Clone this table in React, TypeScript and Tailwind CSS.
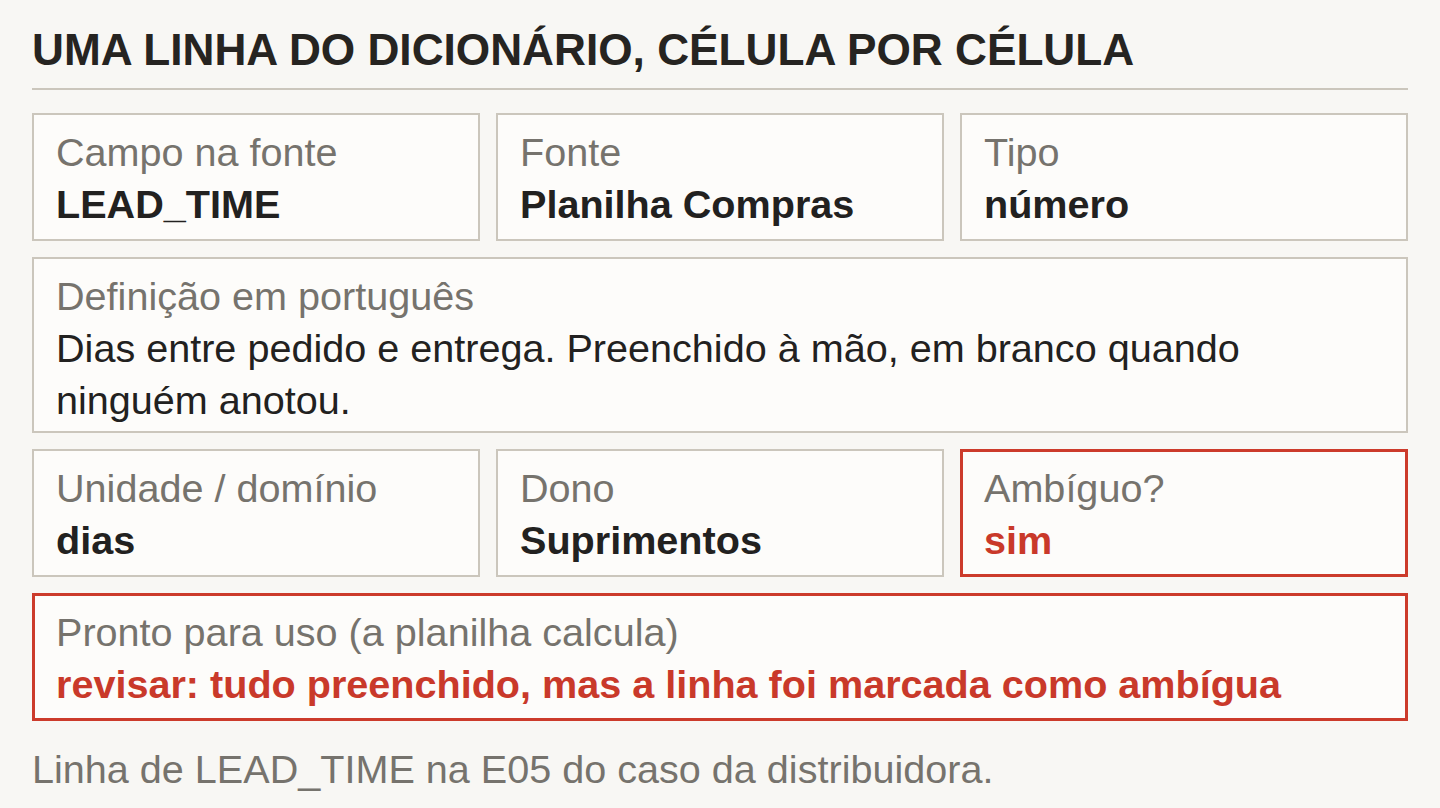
const font = { fontFamily: '"Liberation Sans", Arial, sans-serif' };

function Cell({ label, value, alert = false, wide = false }: { label: string; value: string; alert?: boolean; wide?: boolean }) {
  const box = alert
    ? 'border-[3px] border-[#cc3b2b] pl-[21px] pr-[21px] pt-[10px] pb-[8px]'
    : 'border-2 border-[#cbc6bc] pl-[22px] pr-[22px] pt-[11px] pb-[9px]';
  return (
    <div className={`bg-[#fdfcfa] leading-[52px] ${box} ${wide ? 'col-span-3' : ''}`}>
      <div className="text-[#76736d]">{label}</div>
      <div className={`font-bold ${alert ? 'text-[#c9392a]' : 'text-[#222120]'}`}>{value}</div>
    </div>
  );
}

export default function App() {
  return (
    <div className="min-h-screen bg-[#f8f7f4] px-8 pt-[24px] text-[39.6px]" style={font}>
      <h1 className="text-[44.2px] font-bold leading-[52px] text-[#262421] pb-[12px] border-b-2 border-[#cbc6bc]">
        UMA LINHA DO DICIONÁRIO, CÉLULA POR CÉLULA
      </h1>
      <div className="grid grid-cols-3 gap-4 mt-[23px]">
        <Cell label="Campo na fonte" value="LEAD_TIME" />
        <Cell label="Fonte" value="Planilha Compras" />
        <Cell label="Tipo" value="número" />
        <div className="col-span-3 bg-[#fdfcfa] border-2 border-[#cbc6bc] px-[22px] pt-[11px] pb-[5px] leading-[52px]">
          <div className="text-[#76736d]">Definição em português</div>
          <div className="text-[#222120]">Dias entre pedido e entrega. Preenchido à mão, em branco quando ninguém anotou.</div>
        </div>
        <Cell label="Unidade / domínio" value="dias" />
        <Cell label="Dono" value="Suprimentos" />
        <Cell label="Ambíguo?" value="sim" alert />
        <Cell label="Pronto para uso (a planilha calcula)" value="revisar: tudo preenchido, mas a linha foi marcada como ambígua" alert wide />
      </div>
      <p className="mt-[22px] text-[#76736d] leading-[52px]">Linha de LEAD_TIME na E05 do caso da distribuidora.</p>
    </div>
  );
}
